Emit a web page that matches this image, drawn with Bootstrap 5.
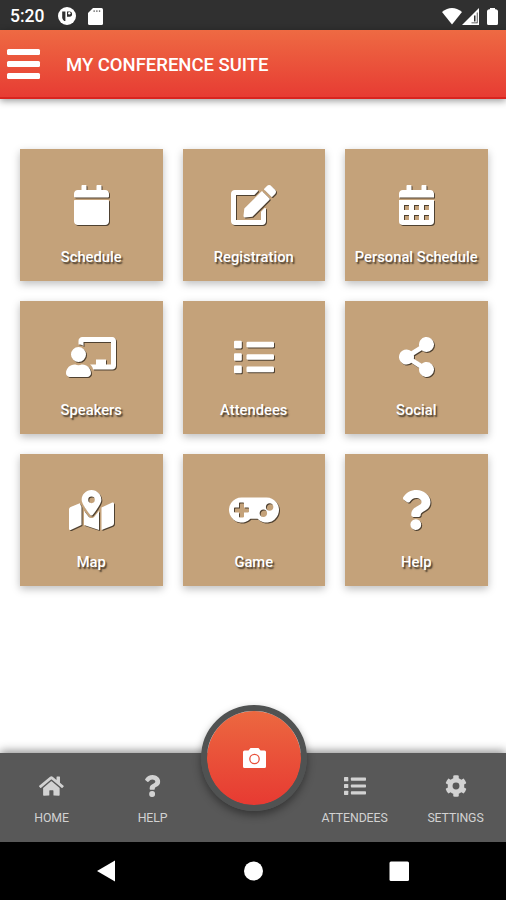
<!DOCTYPE html>
<html lang="en">
<head>
<meta charset="utf-8">
<meta name="viewport" content="width=device-width, initial-scale=1">
<title>My Conference Suite</title>
<link href="https://cdn.jsdelivr.net/npm/bootstrap@5.3.0/dist/css/bootstrap.min.css" rel="stylesheet">
<style>
body{font-family:Roboto,"Liberation Sans",sans-serif;background:#fff;height:900px;overflow:hidden}
svg{display:block;fill:currentColor}
.status{height:30px;background:#303030;padding:2px 8px 0 10px}
.clock{font-size:17.5px;font-weight:500;line-height:28px;width:35px;white-space:nowrap}
.simcard{margin-left:13px}
.appbar{height:69px;background:linear-gradient(#ee6a43,#e73c33);border-bottom:2px solid #d9241f;box-shadow:0 2px 7px rgba(0,0,0,.4);padding:0 7px}
.appbar h1{font-size:18.500px;font-weight:500;line-height:24px;margin:2px 0 0 26px;letter-spacing:-.02px}
.burger{width:33px;height:30px}
.burger i{height:6px;border-radius:1.5px;background:#fff}
.tiles{display:grid;grid-template-columns:repeat(3,142.5px);grid-auto-rows:132.5px;gap:20px;padding:49.500px 20px 0}
.tile{background:#c4a27a;box-shadow:0 3px 8px rgba(0,0,0,.26);padding-top:36px;text-decoration:none;color:#fff}
.tile:hover{color:#fff}
.tile svg{height:40px;overflow:visible;filter:drop-shadow(1.5px 1.500px .7px rgba(0,0,0,.6))}
.tile span{font-size:14.750px;font-weight:500;line-height:20px;margin-top:22.500px;text-shadow:1.5px 1.500px 1.500px rgba(0,0,0,.65);white-space:nowrap}
.tabs{height:89px;background:#585858;box-shadow:0 -2px 9px rgba(0,0,0,.45);padding-left:1px}
.tab{width:20%;color:#d2d2d2;padding-top:22px;text-decoration:none}
.tab svg{height:22px}
.tab span{font-size:12.300px;line-height:16px;margin-top:13px;letter-spacing:-.1px}
.shoot{width:106px;height:106px;left:200.500px;top:-48px;border:6px solid #505252;background:linear-gradient(#ec6840,#e73a32) padding-box;box-shadow:0 4px 9px rgba(0,0,0,.4);color:#fff;padding:0 0 1px 1px}
.system{height:58px;background:#000}
</style>
<script src="https://cdn.jsdelivr.net/npm/bootstrap@5.3.0/dist/js/bootstrap.bundle.min.js"></script>
</head>
<body class="d-flex flex-column">
<svg width="0" height="0" class="position-absolute">
<defs>
<symbol id="question" viewBox="0 0 384 512"><path d="M202 0C122.200 0 70.500 32.700 29.900 91c-7.400 10.600-5.100 25.100 5.200 32.900l43.100 32.700c10.400 7.900 25.200 6 33.300-4.100 25-31.400 43.600-49.500 82.700-49.500 30.800 0 68.800 19.800 68.800 49.600 0 22.600-18.600 34.200-49 51.200-35.400 19.900-82.300 44.600-82.300 106.400V320c0 13.300 10.800 24 24 24h72.500c13.300 0 24-10.700 24-24v-5.800c0-42.900 125.300-44.600 125.300-160.600C377.500 66.300 286.900 0 202 0zM192 373.500a69.300 69.300 0 1 0 0 138.500 69.300 69.300 0 0 0 0-138.500z"/></symbol>
<symbol id="list" viewBox="0 0 512 512"><rect x="0" y="48" width="100" height="98" rx="14"/><rect x="0" y="207" width="100" height="98" rx="14"/><rect x="0" y="366" width="100" height="98" rx="14"/><rect x="160" y="61" width="352" height="72" rx="16"/><rect x="160" y="220" width="352" height="72" rx="16"/><rect x="160" y="379" width="352" height="72" rx="16"/></symbol>
</defs>
</svg>

<header>
<div class="status d-flex align-items-center text-white">
  <span class="clock">5:20</span>
  <svg class="simcard" width="18" height="18" viewBox="0 0 18 18"><circle cx="9" cy="9" r="9"/><path fill="#303030" d="M4.200 4.500h3.200v9.500H6.200a7 7 0 0 1-2-3zM9 4.500h2.500a2.600 2.600 0 0 1 0 5.200H9z"/><circle cx="11.300" cy="6.300" r="1.200"/></svg>
  <svg class="ms-2 me-auto ps-1" width="19" height="17" viewBox="0 0 15 17"><path d="M5 0h8.500Q15 0 15 1.500v14q0 1.500-1.500 1.500h-12Q0 17 0 15.500V5z"/><path fill="#777" d="M5.500 2.300h1.300v1.800H5.500zm2.700 0h1.300v1.800H8.200zm2.700 0h1.300v1.800h-1.300z"/></svg>
  <svg width="20" height="17" viewBox="0 0 20 17"><path d="M0 4Q10-4 20 4L10 16.500z"/></svg>
  <svg width="17" height="17" viewBox="0 0 17 17"><path d="M17 0v17H0z"/><path fill="#303030" d="M12 7.500h1.500v6H12zM14.800 4.500h.8v10.800H9.500v-.8h5.300z"/></svg>
  <svg class="ms-2" width="11" height="17" viewBox="0 0 11 17"><path d="M3 0h5v1.200h1Q11 1.800 11 3.300v12.200q0 1.500-1.500 1.500h-8Q0 17 0 15.500V3.300q0-1.500 2-2.100h1z"/></svg>
</div>
<div class="appbar d-flex align-items-center text-white">
  <div class="burger d-flex flex-column justify-content-between"><i></i><i></i><i></i></div>
  <h1>MY CONFERENCE SUITE</h1>
</div>
</header>

<main class="tiles flex-grow-1 align-content-start">
<a class="tile d-flex flex-column align-items-center" href="#"><svg viewBox="0 0 448 512"><path d="M12 192h424c6.600 0 12 5.400 12 12v260c0 26.500-21.500 48-48 48H48c-26.500 0-48-21.500-48-48V204c0-6.600 5.400-12 12-12zm436-44v-36c0-26.500-21.500-48-48-48h-48V12c0-6.600-5.400-12-12-12h-40c-6.600 0-12 5.400-12 12v52H160V12c0-6.600-5.400-12-12-12h-40c-6.600 0-12 5.400-12 12v52H48C21.500 64 0 85.500 0 112v36c0 6.600 5.400 12 12 12h424c6.600 0 12-5.400 12-12z"/></svg><span>Schedule</span></a>
<a class="tile d-flex flex-column align-items-center" href="#"><svg viewBox="0 0 576 512"><path d="M402.600 83.200l90.200 90.200c3.800 3.800 3.800 10 0 13.800L274.400 405.600l-92.800 10.300c-12.400 1.400-22.900-9.100-21.500-21.500l10.300-92.800L388.800 83.200c3.800-3.800 10-3.800 13.800 0zm162-22.900l-48.800-48.800c-15.200-15.200-39.900-15.200-55.200 0l-35.400 35.400c-3.800 3.800-3.800 10 0 13.800l90.200 90.200c3.800 3.800 10 3.800 13.800 0l35.400-35.400c15.200-15.300 15.200-40 0-55.200zM384 346.200V448H64V128h229.800c3.200 0 6.200-1.300 8.500-3.500l40-40c7.600-7.600 2.200-20.500-8.500-20.500H48C21.500 64 0 85.500 0 112v352c0 26.500 21.500 48 48 48h352c26.500 0 48-21.500 48-48V306.200c0-10.700-12.900-16-20.500-8.500l-40 40c-2.200 2.300-3.500 5.300-3.500 8.500z"/></svg><span>Registration</span></a>
<a class="tile d-flex flex-column align-items-center" href="#"><svg viewBox="0 0 448 512"><path fill-rule="evenodd" d="M0 192h448v272q0 48-48 48H48q-48 0-48-48zM64 256v64h64v-64zm128 0v64h64v-64zm128 0v64h64v-64zM64 384v64h64v-64zm128 0v64h64v-64zm128 0v64h64v-64zM448 160v-48c0-26.500-21.500-48-48-48h-48V12c0-6.600-5.400-12-12-12h-40c-6.600 0-12 5.400-12 12v52H160V12c0-6.600-5.400-12-12-12h-40c-6.600 0-12 5.400-12 12v52H48C21.500 64 0 85.500 0 112v48z"/></svg><span>Personal Schedule</span></a>
<a class="tile d-flex flex-column align-items-center" href="#"><svg viewBox="0 0 640 512"><path d="M208 352c-2.400 0-4.800.4-7.100 1.100C188 357.300 174.400 360 160 360s-28-2.700-41-6.900c-2.200-.7-4.600-1.100-7-1.100C49.900 352-.3 402.500 0 464.600.1 490.900 21.700 512 48 512h224c26.300 0 47.900-21.100 48-47.400.3-62.100-49.900-112.600-112-112.600zm-48-32a96 96 0 1 0 0-192 96 96 0 0 0 0 192zM592 0H208c-26.500 0-48 22.300-48 49.600V96c23.400 0 45.100 6.800 64 17.800V64h352v288h-64v-64H384v64h-76.200c19.100 16.700 33.100 38.700 39.700 64H592c26.500 0 48-22.300 48-49.600V49.600C640 22.300 618.500 0 592 0z"/></svg><span>Speakers</span></a>
<a class="tile d-flex flex-column align-items-center" href="#"><svg viewBox="0 0 512 512"><use href="#list"/></svg><span>Attendees</span></a>
<a class="tile d-flex flex-column align-items-center" href="#"><svg viewBox="0 0 448 512"><path d="M352 320c-22.600 0-43.400 7.800-59.800 20.900l-102.500-64.100a96.600 96.600 0 0 0 0-41.600l102.500-64.100C308.600 184.200 329.400 192 352 192a96 96 0 1 0-93.700-75.200l-102.500 64.100A96 96 0 1 0 96 352c22.600 0 43.400-7.800 59.800-20.900l102.500 64.100A96 96 0 1 0 352 320z"/></svg><span>Social</span></a>
<a class="tile d-flex flex-column align-items-center" href="#"><svg viewBox="0 0 576 512"><path d="M288 0c-69.600 0-126 56.400-126 126 0 56.300 82.400 158.800 113.900 196 6.400 7.600 17.800 7.600 24.200 0C331.700 284.800 414 182.300 414 126 414 56.400 357.600 0 288 0zm0 168a42 42 0 1 1 0-84 42 42 0 0 1 0 84zM20.100 216A32 32 0 0 0 0 245.700V496c0 11.300 11.400 19.100 21.900 14.800L160 448V214.900c-8.800-16-16.100-31.500-21.300-46.400zM288 359.700c-14.100 0-27.400-6.200-36.500-17-19.700-23.200-40.600-49.600-59.500-76.700v182l192 64V266c-18.900 27.100-39.800 53.500-59.500 76.700-9.100 10.800-22.400 17-36.500 17zm266.100-198.500L416 224v288l139.900-56a32 32 0 0 0 20.100-29.700V176c0-11.300-11.400-19.100-21.900-14.800z"/></svg><span>Map</span></a>
<a class="tile d-flex flex-column align-items-center" href="#"><svg viewBox="0 0 640 512"><path d="M480 96H160a160 160 0 1 0 114.200 272h91.500A160 160 0 1 0 480 96zM256 276c0 6.600-5.400 12-12 12h-52v52c0 6.600-5.400 12-12 12h-40c-6.600 0-12-5.400-12-12v-52H76c-6.600 0-12-5.400-12-12v-40c0-6.600 5.400-12 12-12h52v-52c0-6.600 5.400-12 12-12h40c6.600 0 12 5.400 12 12v52h52c6.600 0 12 5.400 12 12zm184 68c-26.500 0-48-21.500-48-48s21.500-48 48-48 48 21.500 48 48-21.500 48-48 48zm80-80c-26.500 0-48-21.500-48-48s21.500-48 48-48 48 21.500 48 48-21.500 48-48 48z"/></svg><span>Game</span></a>
<a class="tile d-flex flex-column align-items-center" href="#"><svg viewBox="0 0 384 512"><use href="#question"/></svg><span>Help</span></a>
</main>

<nav class="tabs d-flex position-relative">
<a class="tab d-flex flex-column align-items-center" href="#"><svg viewBox="0 0 576 512"><path d="M280.400 148.300L96 300.100V464a16 16 0 0 0 16 16l112-.3a16 16 0 0 0 16-16V368a16 16 0 0 1 16-16h64a16 16 0 0 1 16 16v95.600a16 16 0 0 0 16 16.100l112 .3a16 16 0 0 0 16-16V300L295.700 148.300a12.200 12.200 0 0 0-15.300 0zM571.600 251.500L488 182.600V44a12 12 0 0 0-12-12h-56a12 12 0 0 0-12 12v72.700L318.500 43a48 48 0 0 0-61 0L4.300 251.500a12 12 0 0 0-1.600 16.900l25.500 31a12 12 0 0 0 17 1.600l235.200-193.700a12.200 12.200 0 0 1 15.300 0L530.900 301a12 12 0 0 0 16.900-1.600l25.500-31a12 12 0 0 0-1.700-16.900z"/></svg><span>HOME</span></a>
<a class="tab d-flex flex-column align-items-center" href="#"><svg viewBox="0 0 384 512"><use href="#question"/></svg><span>HELP</span></a>
<div class="tab"></div>
<a class="tab d-flex flex-column align-items-center" href="#"><svg viewBox="0 0 512 512"><use href="#list"/></svg><span>ATTENDEES</span></a>
<a class="tab d-flex flex-column align-items-center" href="#"><svg viewBox="0 0 512 512"><path d="M487.400 315.700l-42.600-24.600c4.300-23.200 4.300-47 0-70.200l42.600-24.600c4.900-2.800 7.100-8.600 5.500-14-11.100-35.600-30-67.800-54.700-94.600-3.800-4.100-10-5.100-14.800-2.300L380.800 110c-17.900-15.400-38.500-27.300-60.800-35.100V25.800c0-5.600-3.900-10.500-9.400-11.700-36.700-8.200-74.300-7.800-109.200 0-5.500 1.200-9.400 6.100-9.400 11.700V75c-22.200 7.900-42.800 19.800-60.800 35.100L88.700 85.500c-4.900-2.800-11-1.900-14.800 2.300-24.700 26.700-43.600 58.900-54.700 94.600-1.700 5.400.6 11.200 5.500 14L67.300 221c-4.300 23.200-4.300 47 0 70.200l-42.600 24.600c-4.900 2.800-7.100 8.600-5.500 14 11.100 35.600 30 67.800 54.700 94.600 3.800 4.100 10 5.100 14.800 2.300l42.600-24.600c17.900 15.400 38.500 27.300 60.800 35.100v49.200c0 5.600 3.900 10.500 9.400 11.700 36.700 8.200 74.300 7.800 109.200 0 5.500-1.200 9.400-6.100 9.400-11.700v-49.200c22.200-7.900 42.800-19.800 60.800-35.100l42.600 24.600c4.900 2.800 11 1.900 14.800-2.300 24.700-26.700 43.600-58.900 54.700-94.600 1.500-5.500-.7-11.300-5.600-14.100zM256 336a80 80 0 1 1 0-160 80 80 0 0 1 0 160z"/></svg><span>SETTINGS</span></a>
<button class="shoot position-absolute rounded-circle d-flex align-items-center justify-content-center" aria-label="Camera"><svg width="23" height="20" viewBox="0 0 23 20"><path d="M7.500 0h8l2 2.500H21.500q1.500 0 1.500 1.500V18.500q0 1.500-1.500 1.500h-20Q0 20 0 18.500V4q0-1.500 1.500-1.500h4z"/><circle cx="11.500" cy="11" r="4.700" fill="none" stroke="#e8503a" stroke-width="1.300"/></svg></button>
</nav>
<div class="system text-white d-flex align-items-center">
<svg class="w-100" height="58" viewBox="0 0 506 58"><path d="M97 29l18-10.500v21z"/><circle cx="253.500" cy="29" r="9.500"/><rect x="389.500" y="19.500" width="19.500" height="19.500" rx="1.500"/></svg>
</div>
</body>
</html>
